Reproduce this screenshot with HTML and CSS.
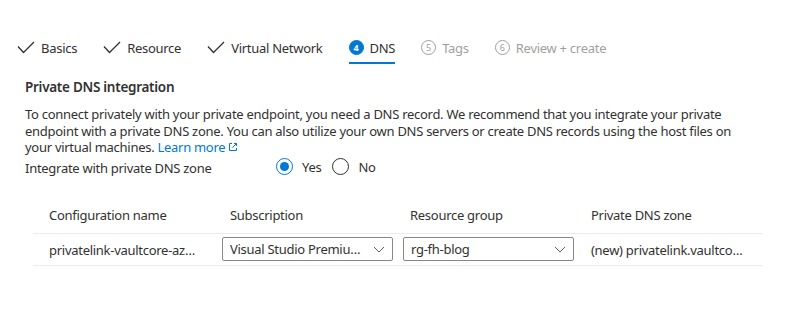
FILE: index.html
```html
<!DOCTYPE html>
<html lang="en">
<head>
	<meta charset=utf-8>
	<title>Create a private endpoint - DNS</title>
	<link rel="stylesheet" href="styles.css">
</head>
<body>
	<nav class="tabs">
		<div class="tab done">
			<svg class="check" width="18" height="14" viewBox="0 0 18 14"><polyline points="1,5.5 6.5,11.5 17,1" /></svg>
			<span>Basics</span>
		</div>
		<div class="tab done">
			<svg class="check" width="18" height="14" viewBox="0 0 18 14"><polyline points="1,5.5 6.5,11.5 17,1" /></svg>
			<span>Resource</span>
		</div>
		<div class="tab done">
			<svg class="check" width="18" height="14" viewBox="0 0 18 14"><polyline points="1,5.5 6.5,11.5 17,1" /></svg>
			<span>Virtual Network</span>
		</div>
		<div class="tab current">
			<span class="num">4</span>
			<span>DNS</span>
		</div>
		<div class="tab todo">
			<span class="num">5</span>
			<span>Tags</span>
		</div>
		<div class="tab todo">
			<span class="num">6</span>
			<span>Review + create</span>
		</div>
	</nav>

	<main class="content">
		<h2>Private DNS integration</h2>
		<p class="intro">To connect privately with your private endpoint, you need a DNS record. We recommend that you integrate your private endpoint with a private DNS zone. You can also utilize your own DNS servers or create DNS records using the host files on your virtual machines. <a href="#">Learn more <svg class="ext" width="10" height="10" viewBox="0 0 10 10"><path d="M4 1.5H1.5v7h7V6M6 1.5h2.5V4M8.5 1.5L4.5 5.5" /></svg></a></p>

		<div class="field">
			<label>Integrate with private DNS zone</label>
			<div class="radios">
				<span class="radio on"></span><span class="rlabel">Yes</span>
				<span class="radio"></span><span class="rlabel">No</span>
			</div>
		</div>

		<div class="grid">
			<div class="head">Configuration name</div>
			<div class="head">Subscription</div>
			<div class="head rg">Resource group</div>
			<div class="head">Private DNS zone</div>

			<div class="cell text">privatelink-vaultcore-azure-net</div>
			<div class="cell"><div class="select"><span>Visual Studio Premium with MSDN</span><svg width="12" height="7" viewBox="0 0 12 7"><polyline points="1,1 6,6 11,1" /></svg></div></div>
			<div class="cell"><div class="select"><span>rg-fh-blog</span><svg width="12" height="7" viewBox="0 0 12 7"><polyline points="1,1 6,6 11,1" /></svg></div></div>
			<div class="cell text">(new) privatelink.vaultcore.azure.net</div>
		</div>
	</main>
</body>
</html>
```

FILE: styles.css
```css
body {
	margin: 0;
	font-family: "Segoe UI", "Noto Sans", sans-serif;
	font-size: 13px;
	letter-spacing: -0.28px;
	color: #323130;
	background: #fff;
}
.tabs {
	display: flex;
	gap: 26px;
	padding: 39px 0 0 17px;
	height: 25px;
}
.tab {
	display: flex;
	align-items: flex-start;
	gap: 6px;
	font-size: 13px;
	line-height: 18px;
	height: 25px;
	box-sizing: border-box;
}
.tab .check {
	margin-top: 2px;
	fill: none;
	stroke: #323130;
	stroke-width: 1.3;
}
.tab.current {
	border-bottom: 2px solid #0078d4;
}
.tab.todo {
	color: #a19f9d;
}
.num {
	width: 15px;
	height: 15px;
	border-radius: 50%;
	box-sizing: border-box;
	margin-top: 1px;
	font-size: 9px;
	line-height: 13px;
	letter-spacing: 0;
	text-align: center;
	font-weight: bold;
	border: 1px solid #a19f9d;
}
.current .num {
	background: #0078d4;
	border-color: #0078d4;
	color: #fff;
}
.todo .num {
	font-weight: normal;
}
.content {
	padding: 14px 0 0 25px;
}
h2 {
	margin: 0;
	font-size: 13.5px;
	font-weight: 600;
	line-height: 18px;
}
.intro {
	margin: 10px 0 0;
	width: 725px;
	line-height: 16.5px;
}
a {
	color: #0078d4;
	text-decoration: none;
}
.ext {
	fill: none;
	stroke: #0078d4;
	stroke-width: 1;
}
.field {
	display: flex;
	align-items: center;
	height: 22px;
}
.field label {
	width: 251px;
	padding-top: 3px;
}
.radios {
	display: flex;
	align-items: center;
}
.radio {
	width: 17px;
	height: 17px;
	box-sizing: border-box;
	border: 1px solid #323130;
	border-radius: 50%;
	position: relative;
}
.radio.on {
	border-color: #0078d4;
}
.radio.on::after {
	content: "";
	position: absolute;
	left: 3px;
	top: 3px;
	width: 9px;
	height: 9px;
	border-radius: 50%;
	background: #0078d4;
}
.rlabel {
	margin: 0 11px 0 9px;
}
.grid {
	display: grid;
	grid-template-columns: 181px 181px 180px 1fr;
	width: 730px;
	margin: 19px 0 0 8px;
}
.head {
	padding: 0 16px;
	height: 36px;
	line-height: 36px;
	border-bottom: 1px solid #edebe9;
}
.head.rg {
	padding-left: 15px;
}
.cell {
	height: 31px;
	border-bottom: 1px solid #edebe9;
	display: flex;
	align-items: center;
	padding: 0 8px;
	min-width: 0;
}
.cell.text {
	padding: 0 16px;
	white-space: nowrap;
	overflow: hidden;
	text-overflow: ellipsis;
	display: block;
	line-height: 32px;
}
.select {
	flex: none;
	width: 171px;
	height: 24px;
	box-sizing: border-box;
	border: 1px solid #8a8886;
	border-radius: 2px;
	display: flex;
	align-items: center;
	padding: 0 7px 0 7px;
	gap: 10px;
}
.select span {
	flex: 1;
	min-width: 0;
	white-space: nowrap;
	overflow: hidden;
	text-overflow: ellipsis;
}
.select svg {
	fill: none;
	stroke: #605e5c;
	stroke-width: 1;
	flex: none;
}
```
